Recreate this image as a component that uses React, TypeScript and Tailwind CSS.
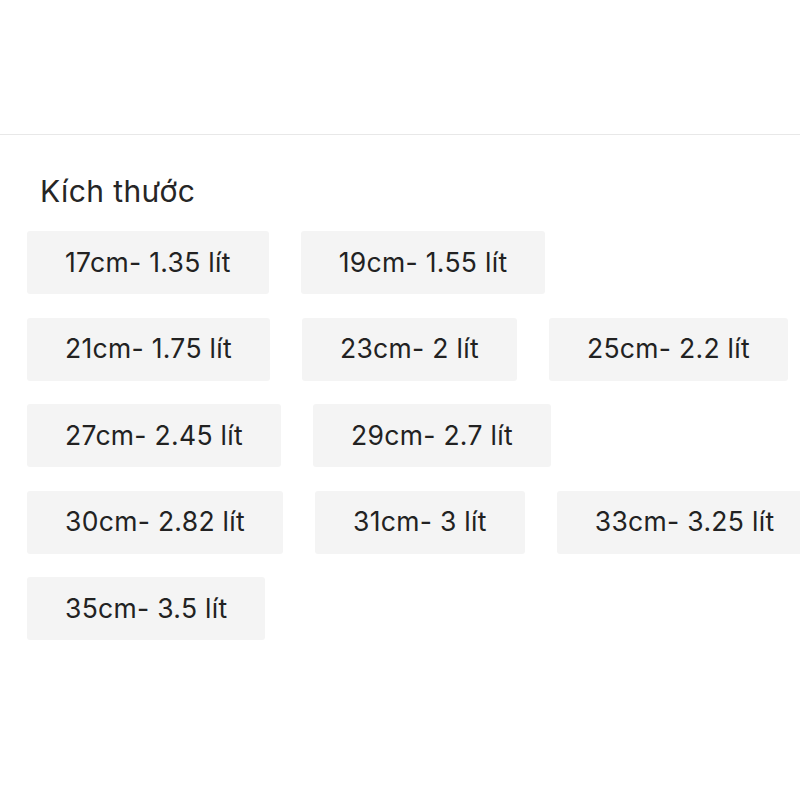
const sizes = [
  '17cm- 1.35 lít',
  '19cm- 1.55 lít',
  '21cm- 1.75 lít',
  '23cm- 2 lít',
  '25cm- 2.2 lít',
  '27cm- 2.45 lít',
  '29cm- 2.7 lít',
  '30cm- 2.82 lít',
  '31cm- 3 lít',
  '33cm- 3.25 lít',
  '35cm- 3.5 lít',
];

export default function App() {
  return (
    <div className="w-[800px] h-[800px] overflow-hidden bg-white font-['Inter',sans-serif] text-[#222]">
      <div className="h-[135px] border-b border-[#e8e8e8]" />
      <div className="pt-[38px] pl-[27px]">
        <h2 className="pl-[13px] text-[30px] leading-[36px] tracking-[0.4px] text-[#262626]">Kích thước</h2>
        <div className="mt-[22px] flex w-[790px] flex-wrap gap-x-[32px] gap-y-[23.5px]">
          {sizes.map((s) => (
            <div
              key={s}
              className="flex h-[63px] shrink-0 items-center rounded-[3px] bg-[#f4f4f4] px-[38px] text-[26.5px] tracking-[0.3px] whitespace-nowrap"
            >
              {s}
            </div>
          ))}
        </div>
      </div>
    </div>
  );
}
